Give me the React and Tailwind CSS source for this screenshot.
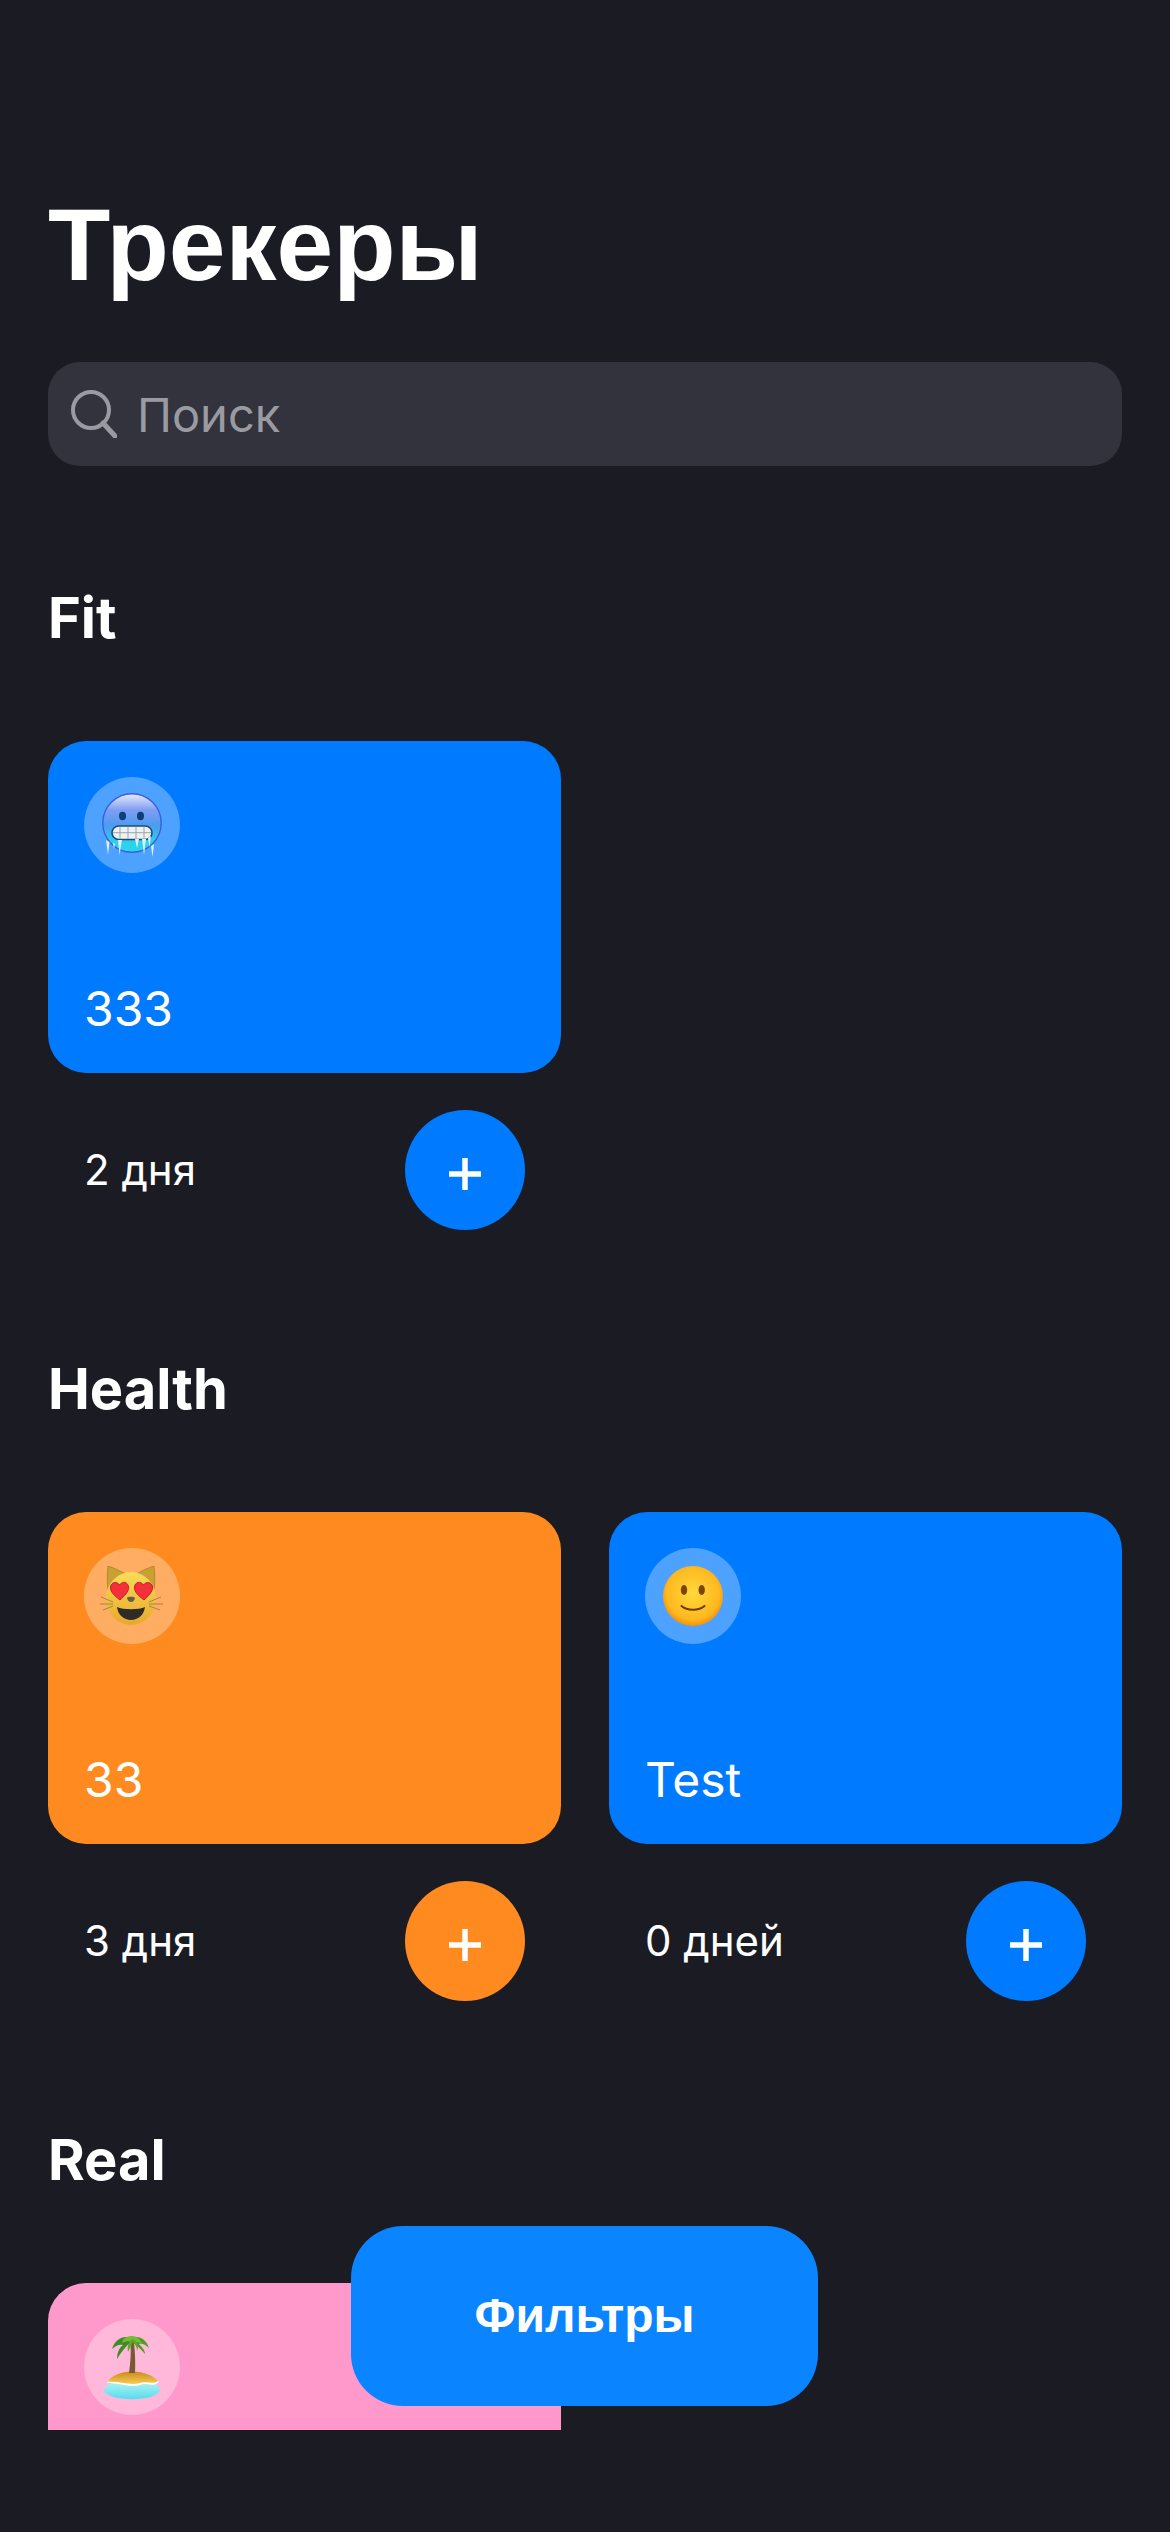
const sections = [
  {
    title: "Fit",
    items: [{ name: "333", days: "2 дня", color: "blue", icon: "cold" }],
  },
  {
    title: "Health",
    items: [
      { name: "33", days: "3 дня", color: "orange", icon: "cat" },
      { name: "Test", days: "0 дней", color: "blue", icon: "smile" },
    ],
  },
  {
    title: "Real",
    items: [{ name: "", days: "", color: "pink", icon: "palm" }],
  },
];

const cardBg = { blue: "bg-[#007aff]", orange: "bg-[#ff8a1f]", pink: "bg-[#ff99cb]" };

const ColdFace = () => (
  <svg viewBox="0 0 60 64" className="w-[60px] h-[64px]">
    <defs>
      <linearGradient id="cold" x1="0" y1="0" x2="0" y2="1">
        <stop offset="0" stopColor="#e6eafc" />
        <stop offset="0.28" stopColor="#7f9df2" />
        <stop offset="0.55" stopColor="#4a9cf0" />
        <stop offset="0.85" stopColor="#2bd4ec" />
      </linearGradient>
    </defs>
    <circle cx="30" cy="30" r="29.2" fill="url(#cold)" stroke="#3a5fdc" strokeWidth="1.4" />
    <ellipse cx="20.5" cy="23" rx="3.5" ry="4.2" fill="#0c3f78" />
    <ellipse cx="38.5" cy="23" rx="3.5" ry="4.2" fill="#0c3f78" />
    <rect x="10" y="33" width="40" height="13.5" rx="6.7" fill="#eef1f2" stroke="#1e4a78" strokeWidth="1.6" />
    <path d="M11 39.7H49M18 33.8V45.8M26 33.8V45.8M34 33.8V45.8M42 33.8V45.8" stroke="#9aa5ad" strokeWidth="1" />
    <path d="M4 47L6 62L7.5 49ZM11 50L12 56L13 51ZM16 47L17.5 62L20 47ZM33 46L35 55L37 46ZM40 46L42 62L44 46ZM46 45L47.5 54L49 43ZM49 53L50.5 64L52 51Z" fill="#d9f3f8" />
  </svg>
);

const CatFace = () => (
  <svg viewBox="0 0 64 60" className="w-[64px] h-[60px]">
    <defs>
      <linearGradient id="catface" x1="0" y1="0" x2="0" y2="1">
        <stop offset="0" stopColor="#f9dc58" />
        <stop offset="1" stopColor="#e7a92c" />
      </linearGradient>
    </defs>
    <path d="M8 0C7 8 7 17 8 24L27 9C21 5 14 2 8 0ZM54 0C55 8 55 17 54 24L35 9C41 5 48 2 54 0Z" fill="#c9a033" stroke="#b68a28" strokeWidth="1" />
    <ellipse cx="31" cy="32.5" rx="25" ry="26.5" fill="url(#catface)" />
    <path d="M1 31L13 36M0 38L13 38M3 44L13 40M49 36L61 31M49 38L63 38M49 40L60 44" stroke="#8f7a45" strokeWidth="0.8" fill="none" />
    <path d="M20 34C15 30 10 26 10.5 21C11 16 17 15 19.5 19C22 15 28 15.5 28.5 21C29 26 24 30 20 34Z" fill="#f4313b" stroke="#c81e28" strokeWidth="1" />
    <path d="M44 34C39 30 34 26 34.5 21C35 15.5 41 15 43.5 19C46 15 52 16 52.5 21C53 26 48 30 44 34Z" fill="#f4313b" stroke="#c81e28" strokeWidth="1" />
    <path d="M27 31.5C29 30.5 33 30.5 35 31.5C35 34 33 36 31 36C29 36 27 34 27 31.5Z" fill="#6e5a4a" />
    <path d="M17 41C23 44 39 44 45 41C44 49 38 54 31 54C24 54 18 49 17 41Z" fill="#2f2b26" />
  </svg>
);

const SmileFace = () => (
  <svg viewBox="0 0 60 60" className="w-[60px] h-[60px]">
    <defs>
      <radialGradient id="smile" cx="0.5" cy="0.45" r="0.55">
        <stop offset="0" stopColor="#ffd93b" />
        <stop offset="0.8" stopColor="#ffb81f" />
        <stop offset="1" stopColor="#f59208" />
      </radialGradient>
    </defs>
    <circle cx="30" cy="30" r="30" fill="url(#smile)" />
    <ellipse cx="21" cy="24" rx="3.2" ry="5" fill="#7a4606" />
    <ellipse cx="38.7" cy="24" rx="3.2" ry="5" fill="#7a4606" />
    <path d="M18.5 40C24 45 36 45 41.5 40" fill="none" stroke="#6b3b05" strokeWidth="2" strokeLinecap="round" />
  </svg>
);

const PalmIsland = () => (
  <svg viewBox="0 0 56 65" className="w-[56px] h-[65px]">
    <defs>
      <linearGradient id="sand" x1="0" y1="0" x2="0" y2="1">
        <stop offset="0" stopColor="#c98a1d" />
        <stop offset="1" stopColor="#f9cb52" />
      </linearGradient>
      <linearGradient id="sea" x1="0" y1="0" x2="0" y2="1">
        <stop offset="0" stopColor="#b9f5ec" />
        <stop offset="1" stopColor="#55dcf2" />
      </linearGradient>
    </defs>
    <ellipse cx="28" cy="54.7" rx="28" ry="9.6" fill="url(#sea)" />
    <path d="M3 48C6 42 18 37 28 37C40 37 50 42 55 47C49 53 42 47 36 50C26 53 13 47 3 48Z" fill="#ffffff" />
    <path d="M4 47C6 41 18 36.5 28 36.5C40 36.5 50 41 54 46C48 50 42 45.5 36 48C26 51 14 46 4 47Z" fill="url(#sand)" />
    <path d="M26 5C27.5 14 26.5 28 25 38H31C31.5 26 31 14 29.5 5Z" fill="#7a5a35" />
    <path d="M27 3C20 0 11 4 8 14C12 10 16 9 19 10C15 13 13 18 13 24C17 17 22 11 27 7Z" fill="#3e8c24" />
    <path d="M28 3C35 0 42 4 45 13C41 9 38 8 35 9C38 12 41 15 41 19C37 14 32 10 28 7Z" fill="#4f9e28" />
    <path d="M28 1C23 1 19 3 18 8C22 6 25 6 28 7C31 6 35 7 38 9C36 4 33 1 28 1Z" fill="#76bd36" />
    <path d="M27 5C24 8 23 12 24 17C26 13 28 9 29 6C31 9 33 12 33 16C35 11 33 6 29 4Z" fill="#5ca82d" />
  </svg>
);

const icons = { cold: ColdFace, cat: CatFace, smile: SmileFace, palm: PalmIsland };

const Tracker = ({ item }) => {
  const Icon = icons[item.icon];
  return (
    <div>
      <div className={`${cardBg[item.color]} h-[332px] rounded-[38px] p-9 flex flex-col justify-between`}>
        <div className="w-24 h-24 rounded-full bg-white/30 flex items-center justify-center">
          <Icon />
        </div>
        {item.name && <div className="text-white text-[48px] leading-[56px]">{item.name}</div>}
      </div>
      <div className="flex items-center justify-between pl-9 pr-9 mt-[37px] h-[120px]">
        <span className="text-white text-[42px] leading-none">{item.days}</span>
        <button className={`${cardBg[item.color]} w-[120px] h-[120px] rounded-full flex items-center justify-center`}>
          <svg viewBox="0 0 32 32" className="w-8 h-8 mt-2">
            <path d="M16 0V32M0 16H32" stroke="white" strokeWidth="5.5" />
          </svg>
        </button>
      </div>
    </div>
  );
};

const App = () => {
  return (
    <div className="relative min-h-[2532px] bg-[#1a1b23] font-['Inter',sans-serif]">
      <div className="h-[2430px] overflow-hidden px-12 pt-[180px]">
        <h1 className="text-white font-['Liberation_Sans',sans-serif] font-bold text-[102px] leading-[130px]">Трекеры</h1>
        <div className="mt-[52px] h-[104px] rounded-[32px] bg-[#32333c] flex items-center pl-[23px] gap-[20px]">
          <svg viewBox="0 0 46 48" className="w-[46px] h-[48px]" fill="none" stroke="#9a9aa2" strokeWidth="4">
            <circle cx="20" cy="20" r="18" />
            <path d="M32 33L44 46" strokeLinecap="round" strokeWidth="5" />
          </svg>
          <span className="text-[#9a9aa2] text-[47px] leading-none">Поиск</span>
        </div>
        <div className="mt-[120px] flex flex-col gap-[127px]">
          {sections.map((s) => (
            <section key={s.title}>
              <h2 className="text-white text-[56px] font-bold leading-[64px] mb-[91px]">{s.title}</h2>
              <div className="grid grid-cols-2 gap-x-12">
                {s.items.map((item) => (
                  <Tracker key={item.icon} item={item} />
                ))}
              </div>
            </section>
          ))}
        </div>
      </div>
      <button className="absolute left-[351px] top-[2226px] w-[467px] h-[180px] rounded-[52px] bg-[#0a84ff] text-white font-['Liberation_Sans',sans-serif] font-bold text-[48px]">
        Фильтры
      </button>
    </div>
  );
};

export default App;
